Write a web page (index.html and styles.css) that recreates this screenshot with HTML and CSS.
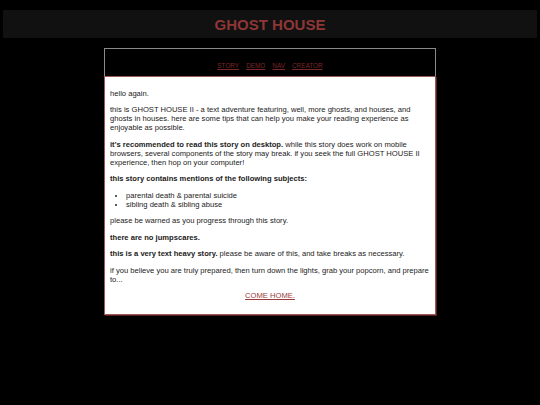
FILE: index.html
```
<!DOCTYPE html>
<html>
<head>
<meta charset="utf-8">
<link rel="stylesheet" href="styles.css">
</head>
<body>
<header class="topbar"><h1 class="title">GHOST HOUSE</h1></header>
<main class="box">
  <nav class="nav">
    <a href="#">STORY</a>
    <a href="#">DEMO</a>
    <a href="#">NAV</a>
    <a href="#">CREATOR</a>
  </nav>
  <section class="content">
    <p>hello again.</p>
    <p>this is GHOST HOUSE II - a text adventure featuring, well, more ghosts, and houses, and ghosts in houses. here are some tips that can help you make your reading experience as enjoyable as possible.</p>
    <p><b>it's recommended to read this story on desktop.</b> while this story does work on mobile browsers, several components of the story may break. if you seek the full GHOST HOUSE II experience, then hop on your computer!</p>
    <p><b>this story contains mentions of the following subjects:</b></p>
    <ul>
      <li>parental death &amp; parental suicide</li>
      <li>sibling death &amp; sibling abuse</li>
    </ul>
    <p>please be warned as you progress through this story.</p>
    <p><b>there are no jumpscares.</b></p>
    <p><b>this is a very text heavy story.</b> please be aware of this, and take breaks as necessary.</p>
    <p>if you believe you are truly prepared, then turn down the lights, grab your popcorn, and prepare to...</p>
    <p class="home"><a href="#">COME HOME.</a></p>
  </section>
</main>
</body>
</html>
```
FILE: styles.css
```
html, body {
  margin: 0;
  padding: 0;
  background: #000;
}
body {
  font-family: "Liberation Sans", Arial, sans-serif;
  padding: 10px 3px;
}
.topbar {
  background: #111;
  height: 28px;
  display: flex;
  align-items: center;
  justify-content: center;
}
.title {
  margin: 0;
  font-size: 15px;
  font-weight: bold;
  color: #8e3636;
  line-height: 1;
}
.box {
  width: 332px;
  margin: 10px auto 0;
}
.nav {
  background: #000;
  border: 1px solid #8a8a8a;
  border-bottom: none;
  height: 28px;
  box-sizing: border-box;
  display: flex;
  justify-content: center;
  align-items: flex-end;
  gap: 7px;
  padding-bottom: 7px;
  font-size: 6.4px;
}
.nav a {
  color: #7a2828;
}
.content {
  background: #fff;
  border: 1px solid #9a5a5a;
  box-shadow: 1px 1px 0 #5a1c1c;
  padding: 4px 5px 6px 5px;
  font-size: 7.6px;
  line-height: 9px;
  color: #222;
}
.content p {
  margin: 7.5px 0;
}
.content ul {
  margin: 7.5px 0;
  padding-left: 16px;
}
.home {
  text-align: center;
}
.home a {
  color: #9a3a3a;
}
```
